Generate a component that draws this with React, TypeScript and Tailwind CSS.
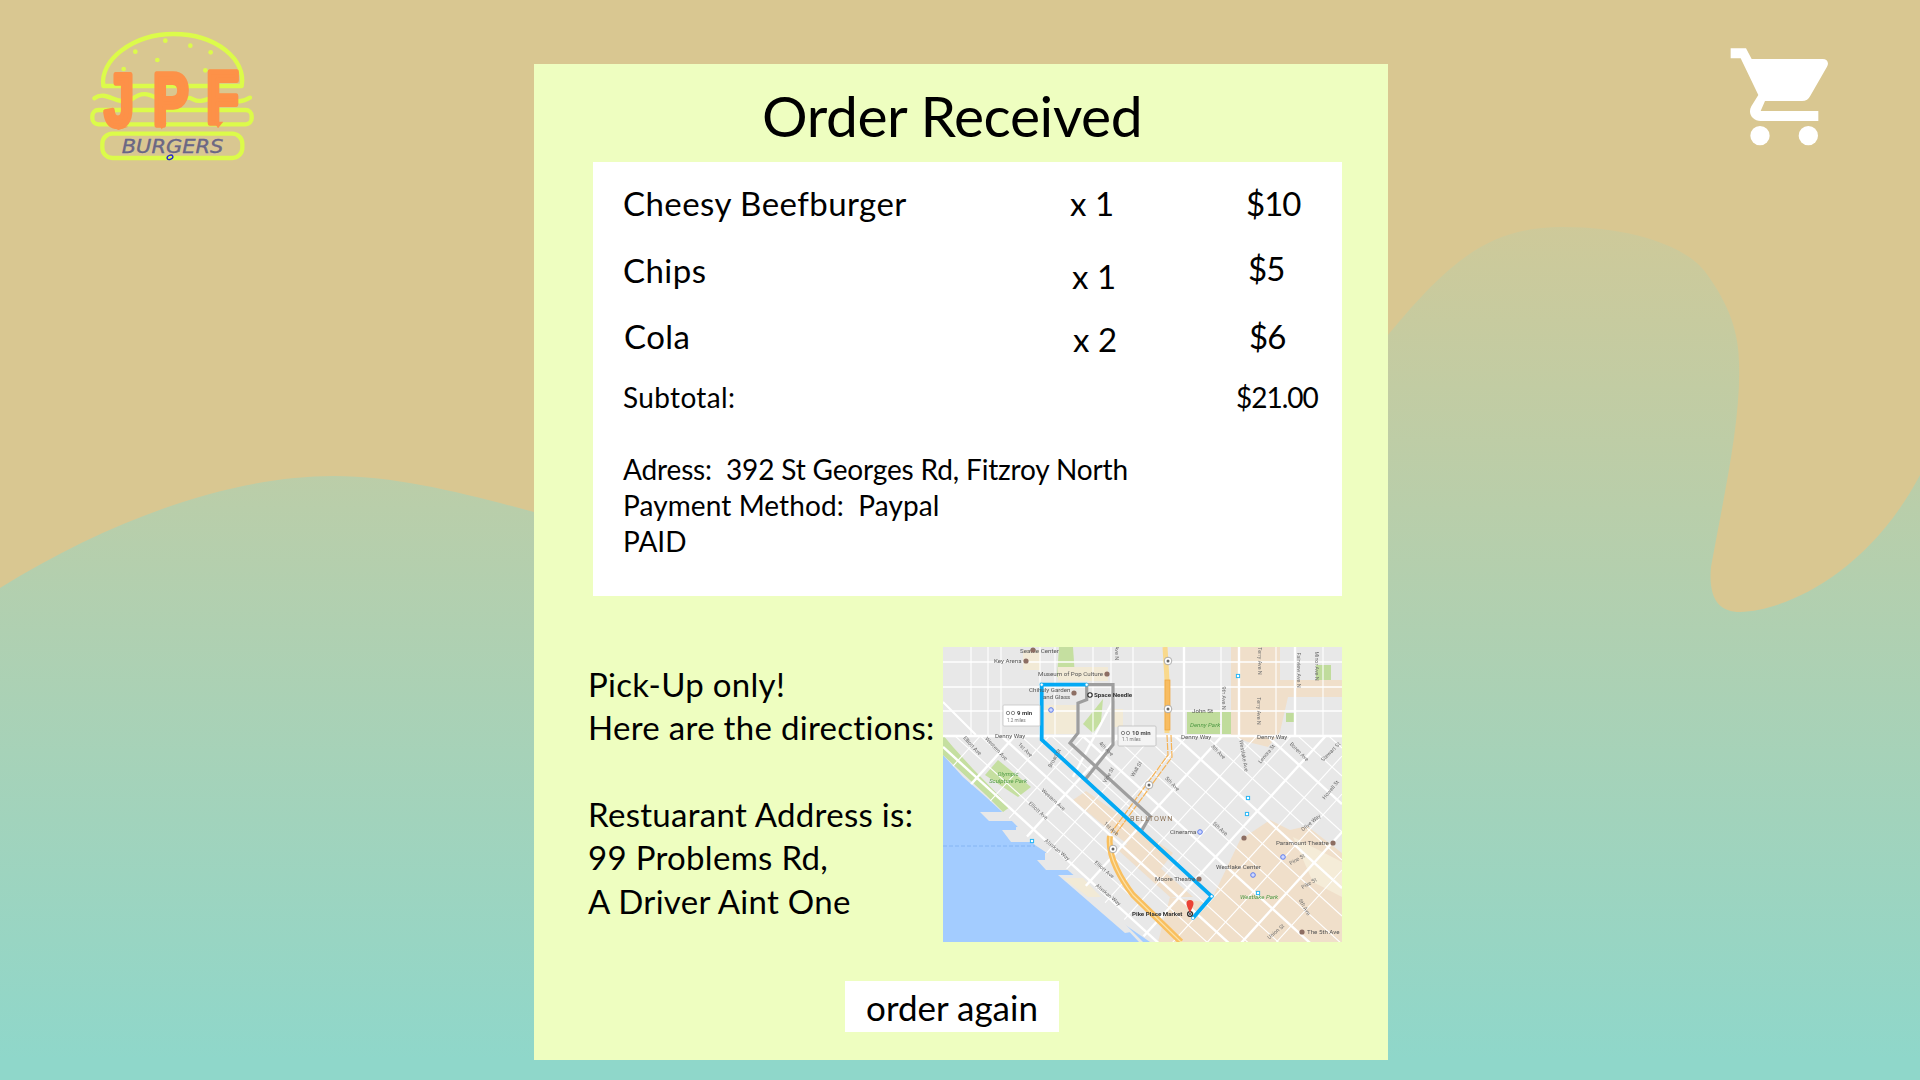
const items = [
  { name: 'Cheesy Beefburger', qty: 'x 1', price: '$10', nameClass: 'pt-0', qtyClass: 'pt-0', priceClass: 'pl-[176px]', h: 'h-[67px]' },
  { name: 'Chips', qty: 'x 1', price: '$5', nameClass: 'pl-[0px]', qtyClass: 'pt-[6px] pl-[2px]', priceClass: 'pl-[176px] -mt-[2px]', h: 'h-[66px]' },
  { name: 'Cola', qty: 'x 2', price: '$6', nameClass: 'pl-[1px]', qtyClass: 'pt-[3px] pl-[3px]', priceClass: 'pl-[176px]', h: 'h-[65px]' },
];

const mapLabels = [
  ['Seattle Center', 77, 6], ['Key Arena', 51, 16], ['Museum of Pop Culture', 95, 29], ['Chihuly Garden', 86, 45], ['and Glass', 100, 52],
  ['Denny Way', 52, 91], ['Denny Way', 238, 92], ['Denny Way', 314, 92], ['John St', 249, 66], ['Cinerama', 227, 187],
  ['Paramount Theatre', 333, 198], ['Westlake Center', 273, 222], ['Moore Theatre', 212, 234], ['The 5th Ave', 364, 287],
] as const;

const roadLabels = [
  ['Elliott Ave', 28, 100, 47], ['Western Ave', 52, 103, 47], ['1st Ave', 81, 104, 45], ['Broad St', 113, 112, -60], ['4th Ave', 162, 103, 45],
  ['Vine St', 167, 129, -60], ['Wall St', 195, 123, -60], ['5th Ave', 228, 138, 45], ['8th Ave', 274, 106, 45], ['Westlake Ave', 299, 109, 80],
  ['Lenora St', 325, 108, -50], ['Boren Ave', 355, 106, 45], ['Stewart St', 389, 106, -45], ['Western Ave', 109, 154, 42], ['Elliott Ave', 94, 165, 42],
  ['1st Ave', 167, 183, 42], ['5th Ave', 276, 183, 42], ['Olive Way', 369, 177, -40], ['Pine St', 355, 214, -30], ['Pike St', 367, 238, -30],
  ['6th Ave', 360, 261, 60], ['Union St', 334, 286, -40], ['Howell St', 389, 144, -50], ['Alaskan Way', 113, 204, 40], ['Elliott Ave', 160, 224, 40],
  ['Alaskan Way', 164, 249, 40], ['Terry Ave N', 314, 64, 90], ['9th Ave N', 279, 51, 90], ['Terry Ave N', 315, 14, 90], ['Fairview Ave N', 354, 23, 90],
  ['Minor Ave N', 372, 19, 90], ['Ave N', 172, 6, 90],
] as const;

const placeIcons = [[83, 14], [164, 27], [131, 46], [90, 3], [256, 232], [390, 196], [359, 285], [301, 191]];
const blueIcons = [[108, 63], [257, 185], [340, 210], [310, 228]];
const shields = [[225, 14], [225, 62], [206, 138], [170, 202]];
const transit = [[295, 29], [305, 151], [304, 167], [315, 246], [89, 194]];

const northV = [28, 45, 58, 97, 112, 150, 168, 190, 241, 278, 296, 333, 352, 380];
const northH = [15, 40, 64];
const southA = [-290, -262, -234, -206, -178, -150, -122, -94, -66, -38, -10, 18, 36, 55, 78, 100];
const southB = [130, 168, 206, 244, 282, 320, 358, 396, 434, 472, 510, 548, 586, 624, 662];

const RouteMap = () => (
  <svg viewBox="0 0 399 295" className="block w-[399px] h-[295px] blur-[0.35px]" fontFamily="Roboto, sans-serif">
    <defs>
      <clipPath id="land">
        <polygon points="0,89 399,89 399,295 207,295 135,232 110,210 92,198 70,175 43,150 20,130 0,108" />
      </clipPath>
    </defs>
    <rect width="399" height="295" fill="#e8e8e8" />
    <polygon points="0,108 20,130 43,150 70,175 92,198 110,210 135,232 165,262 178,275 207,295 0,295" fill="#a3ccff" />
    <polygon points="37,165 72,165 78,174 46,174" fill="#e8e8e8" />
    <polygon points="59,183 73,183 73,180 80,180 100,195 68,195" fill="#e8e8e8" />
    <polygon points="94,213 102,213 102,206 110,206 128,218 128,223 103,223" fill="#e8e8e8" />
    <polygon points="115,228 133,228 200,295 196,295 163,260 188,285 182,286" fill="#e8e8e8" />
    <polygon points="120,231 140,231 158,250 145,250" fill="#f2ead6" />
    <line x1="0" y1="199" x2="92" y2="199" stroke="#7fb0f0" strokeWidth="0.8" strokeDasharray="4 2" />

    <polygon points="0,88 0,108 43,148 60,165 67,160 30,122 10,100" fill="#c5dfa0" />
    <polygon points="42,128 55,113 88,140 75,150" fill="#c5dfa0" />
    <polygon points="140,77 160,52 158,75 150,86" fill="#c5dfa0" />
    <polygon points="116,0 130,0 132,30 114,30" fill="#c5dfa0" />
    <rect x="244" y="65" width="33" height="22" fill="#c0dc9c" />
    <rect x="279" y="65" width="9" height="22" fill="#c0dc9c" />
    <rect x="343" y="66" width="9" height="9" fill="#c0dc9c" />
    <rect x="373" y="18" width="15" height="22" fill="#c0dc9c" />
    <rect x="80" y="3" width="17" height="20" fill="#f2ead6" />
    <rect x="115" y="20" width="50" height="14" fill="#f2ead6" />
    <rect x="102" y="58" width="31" height="29" fill="#f2ead6" />
    <rect x="168" y="62" width="12" height="18" fill="#f2ead6" />
    <polygon points="288,0 337,0 337,33 399,33 399,50 345,50 337,85 325,100 305,95 288,88" fill="#f0dfca" />
    <polygon points="130,153 143,144 230,206 217,223 165,182" fill="#f0dfca" />
    <polygon points="175,203 188,195 250,250 227,250" fill="#f0dfca" />
    <polygon points="215,295 227,250 267,256 297,193 327,173 347,183 364,179 399,206 399,295" fill="#f0dfca" />
    <polygon points="350,190 399,215 399,250 370,235" fill="#f5ecd8" />

    {/* north grid above Denny Way */}
    {northV.map((x) => <line key={x} x1={x} y1="0" x2={x} y2="90" stroke="#fff" strokeWidth={x === 296 || x === 352 || x === 241 ? 2.4 : 1.1} />)}
    {northH.map((y) => <line key={y} x1="0" y1={y} x2="399" y2={y} stroke="#fff" strokeWidth="1.3" />)}
    <line x1="0" y1="55" x2="33" y2="88" stroke="#fff" strokeWidth="2" />
    <line x1="130" y1="130" x2="172" y2="50" stroke="#fff" strokeWidth="2.4" />
    <line x1="0" y1="89" x2="399" y2="89" stroke="#fff" strokeWidth="2.6" />

    {/* diagonal grid below Denny Way */}
    <g clipPath="url(#land)">
      {southA.map((c, i) => <line key={c} x1="0" y1={c} x2="399" y2={c + 363} stroke="#fff" strokeWidth={i % 3 === 0 ? 2.4 : 1.1} />)}
      {southB.map((d, i) => <line key={d} x1="0" y1={d} x2="399" y2={d - 439} stroke="#fff" strokeWidth={i % 3 === 1 ? 2.4 : 1.1} />)}
    </g>

    {/* highway */}
    <path d="M222 0 L224 33 L224 86" fill="none" stroke="#f9d98c" strokeWidth="5" />
    <rect x="222" y="33" width="5" height="50" fill="#f8bd62" stroke="#eda33c" strokeWidth="0.7" />
    <path d="M224 88 L225 108 L168 186" fill="none" stroke="#f6b356" strokeWidth="1.2" strokeDasharray="7 1" />
    <path d="M228 88 L229 110 L172 188" fill="none" stroke="#f6b356" strokeWidth="1.2" strokeDasharray="7 1" />
    <path d="M167 189 C164 210 180 235 190 248 L238 295" fill="none" stroke="#f9bf5e" strokeWidth="6" />
    <path d="M167 189 C164 210 180 235 190 248 L238 295" fill="none" stroke="#fbe2a8" strokeWidth="1.2" />
    {shields.map(([x, y]) => (
      <g key={x}>
        <circle cx={x} cy={y} r="3.8" fill="#fff" stroke="#9a9a9a" strokeWidth="0.8" />
        <circle cx={x} cy={y} r="1.5" fill="#666" />
      </g>
    ))}

    {/* routes */}
    <path d="M143.7 37.7 H170 V97.7 L142 132.7" fill="none" stroke="#9e9e9e" strokeWidth="3.2" />
    <path d="M143.7 37.7 V52.7 L135 56 V86 L127 96 L207 169 L199 183" fill="none" stroke="#9e9e9e" strokeWidth="3.2" />
    <path d="M143.7 37.7 H98.7 V92.7 L268.7 249.3 L250 271" fill="none" stroke="#03a9f4" strokeWidth="3.8" />
    {[[98.7, 37.7], [143.7, 37.7], [268.7, 249.3], [250, 271]].map(([x, y]) => (
      <circle key={x} cx={x} cy={y} r="1.6" fill="#fff" stroke="#03a9f4" strokeWidth="0.6" />
    ))}

    {/* labels */}
    {roadLabels.map(([t, x, y, r], i) => (
      <text key={i} x={x} y={y} fontSize="5.4" fill="#6e6e6e" textAnchor="middle" transform={`rotate(${r} ${x} ${y})`}>{t}</text>
    ))}
    {mapLabels.map(([t, x, y], i) => <text key={i} x={x} y={y} fontSize="6.2" fill="#555">{t}</text>)}
    <text x="247" y="80" fontSize="6.2" fontStyle="italic" fill="#4f9a45">Denny Park</text>
    <text x="65" y="129" fontSize="6" fontStyle="italic" fill="#4f9a45" textAnchor="middle">Olympic</text>
    <text x="65" y="136" fontSize="6" fontStyle="italic" fill="#4f9a45" textAnchor="middle">Sculpture Park</text>
    <text x="297" y="252" fontSize="6.2" fontStyle="italic" fill="#4f9a45">Westlake Park</text>
    <text x="187" y="174" fontSize="7.2" fill="#8d7356" letterSpacing="0.9">BELLTOWN</text>
    <text x="151" y="50" fontSize="6.2" fontWeight="700" fill="#333">Space Needle</text>
    <text x="189" y="269" fontSize="6.2" fontWeight="700" fill="#333">Pike Place Market</text>

    {placeIcons.map(([x, y]) => <circle key={x} cx={x} cy={y} r="2.6" fill="#8d6e63" />)}
    {blueIcons.map(([x, y]) => (
      <circle key={x} cx={x} cy={y} r="2.3" fill="#cfd8ff" stroke="#5c7cee" strokeWidth="1" />
    ))}
    {transit.map(([x, y]) => <rect key={y} x={x - 1.6} y={y - 1.6} width="3.2" height="3.2" fill="#fff" stroke="#29b6f6" strokeWidth="1" />)}
    <circle cx="147" cy="48" r="2.2" fill="#fff" stroke="#222" strokeWidth="1.1" />
    <circle cx="247" cy="267" r="2.4" fill="#fff" stroke="#222" strokeWidth="1.2" />
    <circle cx="247" cy="267" r="0.9" fill="#222" />
    <path d="M247 266 C245 261 243.5 259 243.5 256.5 A3.5 3.5 0 0 1 250.5 256.5 C250.5 259 249 261 247 266 Z" fill="#ea4335" />

    <rect x="60" y="58" width="37" height="21" rx="1" fill="#fff" stroke="#c4c4c4" strokeWidth="0.8" />
    <circle cx="65" cy="66" r="1.7" fill="none" stroke="#444" strokeWidth="0.6" />
    <circle cx="70" cy="66" r="1.7" fill="none" stroke="#444" strokeWidth="0.6" />
    <text x="74" y="68" fontSize="6" fontWeight="700" fill="#333">9 min</text>
    <text x="64" y="75" fontSize="4.6" fill="#777">1.2 miles</text>
    <rect x="175" y="79" width="38" height="20" rx="1" fill="#f4f4f4" stroke="#bdbdbd" strokeWidth="0.8" />
    <circle cx="180" cy="86" r="1.7" fill="none" stroke="#444" strokeWidth="0.6" />
    <circle cx="185" cy="86" r="1.7" fill="none" stroke="#444" strokeWidth="0.6" />
    <text x="189" y="88" fontSize="6" fontWeight="700" fill="#444">10 min</text>
    <text x="179" y="94" fontSize="4.6" fill="#777">1.1 miles</text>
  </svg>
);

const Logo = () => (
  <svg viewBox="0 0 660 510" className="block w-[220px] h-[170px]">
    <g fill="none" stroke="#dcfb4a" strokeWidth="13" strokeLinecap="round" strokeLinejoin="round">
      <path d="M130 228 C118 150 220 72 340 72 C470 72 560 150 545 228 Z" />
      <path d="M103 265 C140 238 170 290 215 268 C250 240 270 255 300 268 C340 285 370 250 400 268 C430 285 460 250 500 262 C530 280 550 275 570 263" />
      <rect x="97" y="300" width="478" height="43" rx="18" />
      <rect x="127" y="371" width="420" height="73" rx="30" />
    </g>
    {[[316, 92], [391, 107], [452, 127], [226, 125], [292, 150], [436, 181], [191, 177]].map(([x, y]) => (
      <circle key={x} cx={x} cy={y} r="7" fill="#dcfb4a" />
    ))}
    <g fill="#fd9148" stroke="#fd9148" strokeWidth="16" strokeLinejoin="round" fontFamily="'Liberation Sans', sans-serif" fontWeight="700" fontSize="225">
      <text transform="translate(133 347) scale(0.72 1)">J</text>
      <text transform="translate(278 345) scale(0.72 1)">P</text>
      <text transform="translate(438 340) scale(0.72 1)">F</text>
    </g>
    <path d="M150 345 L175 360 L205 350 Z M295 340 L305 358 L320 340 Z M462 335 L474 355 L490 335 Z" fill="#fd9148" />
    <text x="185" y="430" fontFamily="'DejaVu Sans', sans-serif" fontStyle="italic" fontSize="58" fill="#6d6b78" stroke="#5d58a8" strokeWidth="1" textLength="305" lengthAdjust="spacingAndGlyphs">BURGERS</text>
    <ellipse cx="330" cy="442" rx="9" ry="6" fill="#dcfb4a" stroke="#2323d0" strokeWidth="4" transform="rotate(-25 330 442)" />
  </svg>
);

const Cart = () => (
  <svg viewBox="0 0 480 390" className="block w-[160px] h-[130px]" fill="#fff">
    <path d="M92 55 H138 L155 87 H368 C382 87 388 98 381 110 L331 197 C326 207 318 213 306 213 H195 L182 243 H355 V273 H182 C158 273 142 250 154 229 L175 195 L122 85 H92 Z" />
    <circle cx="180" cy="317" r="29" />
    <circle cx="325" cy="317" r="29" />
  </svg>
);

const App = () => {
  return (
    <div className="relative h-[1080px] w-[1920px] overflow-hidden bg-[#d9c791] font-['Lato',sans-serif] text-black">
      <svg viewBox="0 0 1920 1080" className="absolute inset-0 h-full w-full">
        <defs>
          <linearGradient id="wash" gradientUnits="userSpaceOnUse" x1="0" y1="80" x2="0" y2="1060">
            <stop offset="0" stopColor="#d9c791" />
            <stop offset="1" stopColor="#8fd7ca" />
          </linearGradient>
        </defs>
        <path
          d="M0 588 C110 520 230 476 334 476 C400 476 470 495 534 512 L1388 335 C1450 260 1490 227 1562 227 C1640 227 1690 250 1706 273 C1730 305 1739 335 1739 363 C1741 420 1725 490 1711 567 C1708 600 1720 612 1740 612 C1790 610 1870 570 1920 475 L1920 1080 L0 1080 Z"
          fill="url(#wash)"
        />
      </svg>

      <div className="relative flex h-full">
        <div className="w-[534px] pl-[60px] pt-[10px]">
          <Logo />
        </div>

        <main className="mt-[64px] h-[996px] w-[854px] bg-[#eefec0]">
          <h1 className="ml-[228px] pt-[21px] h-[98px] text-[57px] leading-[60px] font-normal tracking-[-0.4px]">Order Received</h1>

          <section className="ml-[59px] h-[434px] w-[749px] bg-white pl-[30px] pt-[19px]">
            {items.map((item) => (
              <div key={item.name} className={`flex text-[33px] leading-[44px] ${item.h}`}>
                <div className={`w-[447px] tracking-[0.45px] ${item.nameClass}`}>{item.name}</div>
                <div className={`w-[0px] whitespace-nowrap ${item.qtyClass}`}>{item.qty}</div>
                <div className={`whitespace-nowrap tracking-[-1px] ${item.priceClass}`}>{item.price}</div>
              </div>
            ))}
            <div className="flex h-[72px] text-[28px] leading-[36px]">
              <div className="w-[613px] tracking-[0.35px]">Subtotal:</div>
              <div className="tracking-[-1px]">$21.00</div>
            </div>
            <div className="text-[28px] leading-[36px]">
              <p className="tracking-[-0.15px]">Adress:&nbsp; 392 St Georges Rd, Fitzroy North</p>
              <p className="tracking-[0.1px]">Payment Method:&nbsp; Paypal</p>
              <p>PAID</p>
            </div>
          </section>

          <section className="mt-[51px] ml-[54px] flex h-[295px]">
            <div className="w-[355px] pt-[16px] text-[33px] leading-[43.4px] tracking-[0.3px]">
              <p>Pick-Up only!</p>
              <p>Here are the directions:</p>
              <p className="mt-[43px]">Restuarant Address is:</p>
              <p>99 Problems Rd,</p>
              <p>A Driver Aint One</p>
            </div>
            <RouteMap />
          </section>

          <button className="ml-[311px] mt-[39px] block h-[51px] w-[214px] bg-white text-[35px] leading-[53px]">order again</button>
        </main>

        <div className="flex-1 pl-[312px] pt-[30px]">
          <Cart />
        </div>
      </div>
    </div>
  );
};

export default App;
